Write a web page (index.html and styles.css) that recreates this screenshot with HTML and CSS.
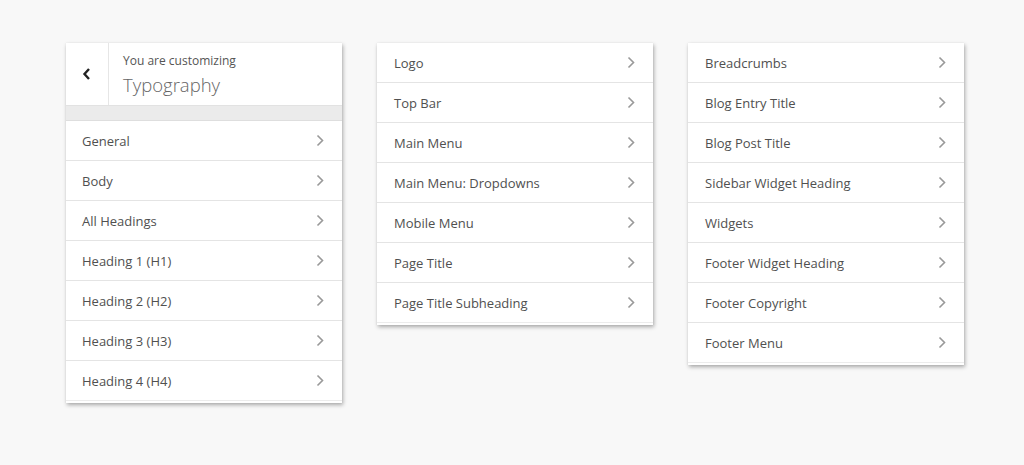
FILE: index.html
```html
<!DOCTYPE html>
<html>
<head>
<meta charset="utf-8">
<link rel="stylesheet" href="styles.css">
</head>
<body>
<div class="stage">
  <div class="panel">
    <div class="head">
      <div class="back">
        <svg width="10" height="14" viewBox="0 0 10 14"><polyline points="7,2 2.5,7 7,12" fill="none" stroke="#222" stroke-width="2.4"/></svg>
      </div>
      <div class="head-text">
        <div class="sub">You are customizing</div>
        <div class="title">Typography</div>
      </div>
    </div>
    <div class="band"></div>
    <div class="row"><span>General</span><svg class="chev" width="8" height="13" viewBox="0 0 8 13"><polyline points="1.5,1.5 6.5,6.5 1.5,11.5" fill="none" stroke="#999" stroke-width="1.6"/></svg></div>
    <div class="row"><span>Body</span><svg class="chev" width="8" height="13" viewBox="0 0 8 13"><polyline points="1.5,1.5 6.5,6.5 1.5,11.5" fill="none" stroke="#999" stroke-width="1.6"/></svg></div>
    <div class="row"><span>All Headings</span><svg class="chev" width="8" height="13" viewBox="0 0 8 13"><polyline points="1.5,1.5 6.5,6.5 1.5,11.5" fill="none" stroke="#999" stroke-width="1.6"/></svg></div>
    <div class="row"><span>Heading 1 (H1)</span><svg class="chev" width="8" height="13" viewBox="0 0 8 13"><polyline points="1.5,1.5 6.5,6.5 1.5,11.5" fill="none" stroke="#999" stroke-width="1.6"/></svg></div>
    <div class="row"><span>Heading 2 (H2)</span><svg class="chev" width="8" height="13" viewBox="0 0 8 13"><polyline points="1.5,1.5 6.5,6.5 1.5,11.5" fill="none" stroke="#999" stroke-width="1.6"/></svg></div>
    <div class="row"><span>Heading 3 (H3)</span><svg class="chev" width="8" height="13" viewBox="0 0 8 13"><polyline points="1.5,1.5 6.5,6.5 1.5,11.5" fill="none" stroke="#999" stroke-width="1.6"/></svg></div>
    <div class="row"><span>Heading 4 (H4)</span><svg class="chev" width="8" height="13" viewBox="0 0 8 13"><polyline points="1.5,1.5 6.5,6.5 1.5,11.5" fill="none" stroke="#999" stroke-width="1.6"/></svg></div>
  </div>

  <div class="panel">
    <div class="row"><span>Logo</span><svg class="chev" width="8" height="13" viewBox="0 0 8 13"><polyline points="1.5,1.5 6.5,6.5 1.5,11.5" fill="none" stroke="#999" stroke-width="1.6"/></svg></div>
    <div class="row"><span>Top Bar</span><svg class="chev" width="8" height="13" viewBox="0 0 8 13"><polyline points="1.5,1.5 6.5,6.5 1.5,11.5" fill="none" stroke="#999" stroke-width="1.6"/></svg></div>
    <div class="row"><span>Main Menu</span><svg class="chev" width="8" height="13" viewBox="0 0 8 13"><polyline points="1.5,1.5 6.5,6.5 1.5,11.5" fill="none" stroke="#999" stroke-width="1.6"/></svg></div>
    <div class="row"><span>Main Menu: Dropdowns</span><svg class="chev" width="8" height="13" viewBox="0 0 8 13"><polyline points="1.5,1.5 6.5,6.5 1.5,11.5" fill="none" stroke="#999" stroke-width="1.6"/></svg></div>
    <div class="row"><span>Mobile Menu</span><svg class="chev" width="8" height="13" viewBox="0 0 8 13"><polyline points="1.5,1.5 6.5,6.5 1.5,11.5" fill="none" stroke="#999" stroke-width="1.6"/></svg></div>
    <div class="row"><span>Page Title</span><svg class="chev" width="8" height="13" viewBox="0 0 8 13"><polyline points="1.5,1.5 6.5,6.5 1.5,11.5" fill="none" stroke="#999" stroke-width="1.6"/></svg></div>
    <div class="row"><span>Page Title Subheading</span><svg class="chev" width="8" height="13" viewBox="0 0 8 13"><polyline points="1.5,1.5 6.5,6.5 1.5,11.5" fill="none" stroke="#999" stroke-width="1.6"/></svg></div>
  </div>

  <div class="panel">
    <div class="row"><span>Breadcrumbs</span><svg class="chev" width="8" height="13" viewBox="0 0 8 13"><polyline points="1.5,1.5 6.5,6.5 1.5,11.5" fill="none" stroke="#999" stroke-width="1.6"/></svg></div>
    <div class="row"><span>Blog Entry Title</span><svg class="chev" width="8" height="13" viewBox="0 0 8 13"><polyline points="1.5,1.5 6.5,6.5 1.5,11.5" fill="none" stroke="#999" stroke-width="1.6"/></svg></div>
    <div class="row"><span>Blog Post Title</span><svg class="chev" width="8" height="13" viewBox="0 0 8 13"><polyline points="1.5,1.5 6.5,6.5 1.5,11.5" fill="none" stroke="#999" stroke-width="1.6"/></svg></div>
    <div class="row"><span>Sidebar Widget Heading</span><svg class="chev" width="8" height="13" viewBox="0 0 8 13"><polyline points="1.5,1.5 6.5,6.5 1.5,11.5" fill="none" stroke="#999" stroke-width="1.6"/></svg></div>
    <div class="row"><span>Widgets</span><svg class="chev" width="8" height="13" viewBox="0 0 8 13"><polyline points="1.5,1.5 6.5,6.5 1.5,11.5" fill="none" stroke="#999" stroke-width="1.6"/></svg></div>
    <div class="row"><span>Footer Widget Heading</span><svg class="chev" width="8" height="13" viewBox="0 0 8 13"><polyline points="1.5,1.5 6.5,6.5 1.5,11.5" fill="none" stroke="#999" stroke-width="1.6"/></svg></div>
    <div class="row"><span>Footer Copyright</span><svg class="chev" width="8" height="13" viewBox="0 0 8 13"><polyline points="1.5,1.5 6.5,6.5 1.5,11.5" fill="none" stroke="#999" stroke-width="1.6"/></svg></div>
    <div class="row"><span>Footer Menu</span><svg class="chev" width="8" height="13" viewBox="0 0 8 13"><polyline points="1.5,1.5 6.5,6.5 1.5,11.5" fill="none" stroke="#999" stroke-width="1.6"/></svg></div>
  </div>
</div>
</body>
</html>
```

FILE: styles.css
```css
html, body {
  margin: 0;
  padding: 0;
  background: #f8f8f8;
  font-family: "Open Sans", "Noto Sans", sans-serif;
  color: #555;
}

.stage {
  display: flex;
  align-items: flex-start;
  gap: 35px;
  padding: 43px 0 40px 66px;
}

.panel {
  width: 276px;
  background: #fff;
  padding-bottom: 2px;
  box-shadow: 1px 2px 4px rgba(0, 0, 0, 0.32), 0 0 1px rgba(0, 0, 0, 0.08);
}

.head {
  display: flex;
  height: 62px;
  border-bottom: 1px solid #e2e2e2;
}

.back {
  width: 42px;
  border-right: 1px solid #e6e6e6;
  display: flex;
  align-items: center;
  justify-content: center;
}

.head-text {
  padding: 9px 0 0 14px;
}

.sub {
  font-size: 12px;
  line-height: 18px;
  color: #555;
}

.title {
  font-size: 18.5px;
  font-weight: 300;
  line-height: 30px;
  color: #666;
}

.band {
  height: 14px;
  background: #ebebeb;
  border-bottom: 1px solid #dedede;
}

.row {
  height: 39px;
  border-bottom: 1px solid #e4e4e4;
  display: flex;
  align-items: center;
  justify-content: space-between;
  padding: 0 18px 0 16px;
  font-size: 13px;
  color: #505050;
}

.panel + .panel .row {
  padding-left: 17px;
}

.row:last-child {
  border-bottom-color: #ececec;
}

.chev {
  display: block;
}
```
